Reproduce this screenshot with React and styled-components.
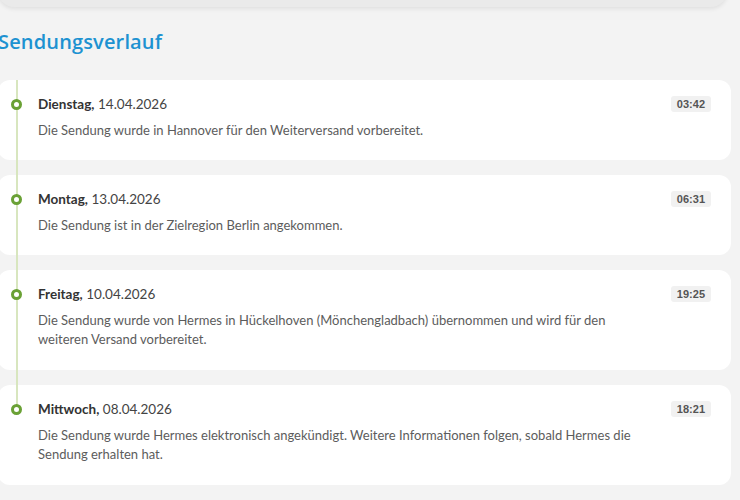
import React from 'react';
import styled, { createGlobalStyle } from 'styled-components';

const Global = createGlobalStyle`
  html, body { margin:0; padding:0; background:#f3f3f3; }
  body { font-family: Lato, "Noto Sans", Arial, sans-serif; overflow:hidden; }
`;

const Page = styled.div`
  width:740px; height:500px; overflow:hidden; margin-left:-2px;
`;

const TopCard = styled.div`
  height:24px; margin-top:-17px; width:729px; background:#eaeaea; border-radius:0 0 16px 16px;
  box-shadow:0 2px 4px rgba(0,0,0,0.08);
`;

const Title = styled.h2`
  margin:21px 0 24px 0; font-family:"Open Sans", "Noto Sans", sans-serif; font-weight:600; font-size:20px; line-height:28px; color:#1d92d1; letter-spacing:0.15px;
`;

const Timeline = styled.div`
  display:flex; flex-direction:column; gap:15px; width:733px;
`;

const Item = styled.div`
  position:relative; background:#fff; border-radius:12px; padding:14px 20px 18px 40px; min-height:${p=>p.tall ? 100 : 80}px; box-sizing:border-box;
`;

const Line = styled.span`
  position:absolute; left:17.5px; width:2px; background:#d8e6bf;
  top:${p=>p.first ? '0' : '-15px'}; ${p=>p.last ? 'height:39px;' : 'bottom:0;'}
`;

const Dot = styled.span`
  position:absolute; left:13px; top:19px; width:11px; height:11px; border-radius:50%; box-sizing:border-box;
  border:3.5px solid #6aa135; background:#fff;
`;

const Head = styled.div`
  display:flex; align-items:center; justify-content:space-between; height:20px;
`;

const DateText = styled.div`
  font-size:13.5px; color:#444;
  b{font-weight:700; color:#333;}
`;

const Time = styled.span`
  font-family:"Liberation Sans", Arial, sans-serif; font-weight:700; font-size:11px; color:#555; background:#f1f1f1; border-radius:3px; padding:1px 6px; line-height:14px;
`;

const Desc = styled.p`
  margin:7px 0 0 0; font-size:13px; line-height:19px; color:#5c5c5c; max-width:600px;
`;

const events = [
  { day:'Dienstag', date:'14.04.2026', time:'03:42', text:'Die Sendung wurde in Hannover für den Weiterversand vorbereitet.' },
  { day:'Montag', date:'13.04.2026', time:'06:31', text:'Die Sendung ist in der Zielregion Berlin angekommen.' },
  { day:'Freitag', date:'10.04.2026', time:'19:25', text:'Die Sendung wurde von Hermes in Hückelhoven (Mönchengladbach) übernommen und wird für den weiteren Versand vorbereitet.', tall:true },
  { day:'Mittwoch', date:'08.04.2026', time:'18:21', text:'Die Sendung wurde Hermes elektronisch angekündigt. Weitere Informationen folgen, sobald Hermes die Sendung erhalten hat.', tall:true },
];

export default function App(){
  return (
    <Page>
      <Global/>
      <TopCard/>
      <Title>Sendungsverlauf</Title>
      <Timeline>
        {events.map((e,i)=>(
          <Item key={e.time} tall={e.tall}>
            <Line first={i===0} last={i===events.length-1}/>
            <Dot/>
            <Head>
              <DateText><b>{e.day},</b> {e.date}</DateText>
              <Time>{e.time}</Time>
            </Head>
            <Desc>{e.text}</Desc>
          </Item>
        ))}
      </Timeline>
    </Page>
  );
}
